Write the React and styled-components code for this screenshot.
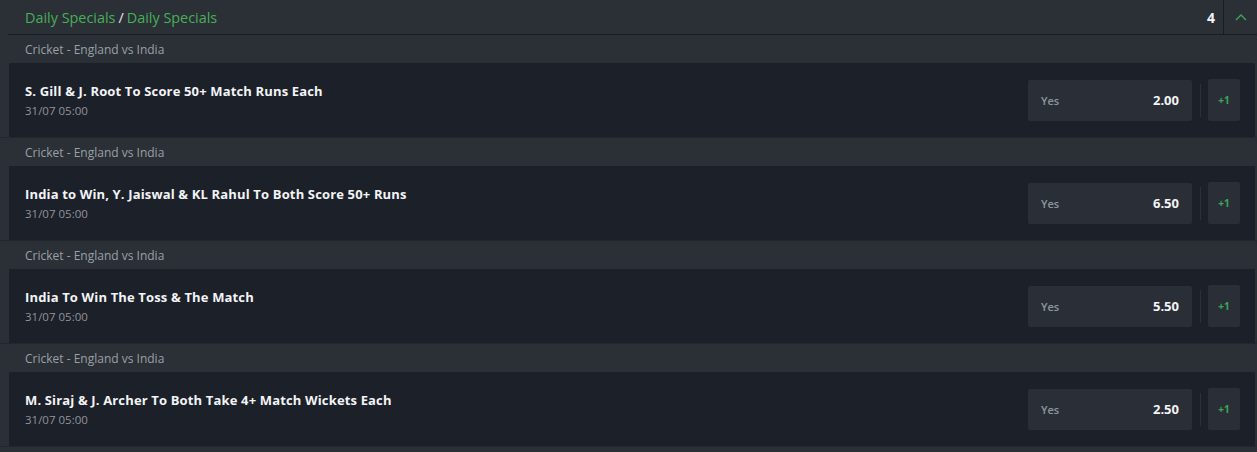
import React from "react";
import styled, { createGlobalStyle } from "styled-components";

const Global = createGlobalStyle`
  html, body { margin: 0; padding: 0; background: #2b2f36; }
  body { font-family: "Open Sans", Lato, sans-serif; -webkit-font-smoothing: antialiased; }
`;

const Page = styled.div`
  width: 1257px;
  height: 452px;
  background: #2b2f36;
  overflow: hidden;
`;

const Header = styled.div`
  display: flex;
  align-items: stretch;
  height: 34px;
  margin-left: 8px;
  border-bottom: 1px solid #1a1d23;
`;

const Title = styled.div`
  flex: 1;
  display: flex;
  align-items: center;
  padding-left: 17px;
  font-size: 14.4px;
  color: #45b058;
  gap: 3px;
`;

const Slash = styled.span`
  color: #e6e8ea;
`;

const Count = styled.div`
  display: flex;
  align-items: center;
  padding-right: 8px;
  font-size: 14px;
  font-weight: 700;
  color: #f2f3f5;
  border-right: 1px solid #1a1d23;
`;

const Toggle = styled.div`
  width: 33px;
  display: flex;
  align-items: center;
  justify-content: center;
`;

const List = styled.div`
  display: flex;
  flex-direction: column;
`;

const Market = styled.div`
  display: flex;
  flex-direction: column;
  border-bottom: 1px solid #22262d;
`;

const Category = styled.div`
  height: 28px;
  display: flex;
  align-items: center;
  padding-left: 25px;
  font-size: 12px;
  color: #9aa0a7;
`;

const Event = styled.div`
  height: 74px;
  margin-left: 9px;
  margin-right: 2px;
  background: #1c2029;
  display: flex;
  align-items: center;
  padding-left: 16px;
  padding-right: 15px;
`;

const Info = styled.div`
  flex: 1;
  display: flex;
  flex-direction: column;
  gap: 3px;
`;

const EventName = styled.div`
  font-size: 13px;
  font-weight: 700;
  letter-spacing: 0.15px;
  color: #f3f4f6;
`;

const EventDate = styled.div`
  font-size: 11.5px;
  color: #8f959c;
`;

const OddsButton = styled.div`
  width: 164px;
  height: 41px;
  box-sizing: border-box;
  background: #2a2f37;
  border-radius: 2px;
  display: flex;
  align-items: center;
  justify-content: space-between;
  padding: 0 13px;
`;

const Label = styled.span`
  font-size: 11px;
  font-weight: 600;
  color: #8f959c;
`;

const Price = styled.span`
  font-size: 13px;
  font-weight: 700;
  color: #f3f4f6;
`;

const Divider = styled.div`
  width: 1px;
  height: 33px;
  background: #2c3139;
  margin: 0 7px 0 8px;
`;

const MoreButton = styled.div`
  width: 32px;
  height: 42px;
  background: #2a2f37;
  border-radius: 2px;
  display: flex;
  align-items: center;
  justify-content: center;
  font-size: 10px;
  font-weight: 700;
  color: #3fa653;
`;

const markets = [
  { name: "S. Gill & J. Root To Score 50+ Match Runs Each", price: "2.00" },
  { name: "India to Win, Y. Jaiswal & KL Rahul To Both Score 50+ Runs", price: "6.50" },
  { name: "India To Win The Toss & The Match", price: "5.50" },
  { name: "M. Siraj & J. Archer To Both Take 4+ Match Wickets Each", price: "2.50" },
];

export default function App() {
  return (
    <Page>
      <Global />
      <Header>
        <Title>
          <span>Daily Specials</span>
          <Slash>/</Slash>
          <span>Daily Specials</span>
        </Title>
        <Count>4</Count>
        <Toggle>
          <svg width="12" height="8" viewBox="0 0 12 8" fill="none">
            <path d="M1 7L6 2L11 7" stroke="#3fa653" strokeWidth="1.4" />
          </svg>
        </Toggle>
      </Header>
      <List>
        {markets.map((m, i) => (
          <Market key={i}>
            <Category>Cricket - England vs India</Category>
            <Event>
              <Info>
                <EventName>{m.name}</EventName>
                <EventDate>31/07 05:00</EventDate>
              </Info>
              <OddsButton>
                <Label>Yes</Label>
                <Price>{m.price}</Price>
              </OddsButton>
              <Divider />
              <MoreButton>+1</MoreButton>
            </Event>
          </Market>
        ))}
      </List>
    </Page>
  );
}
